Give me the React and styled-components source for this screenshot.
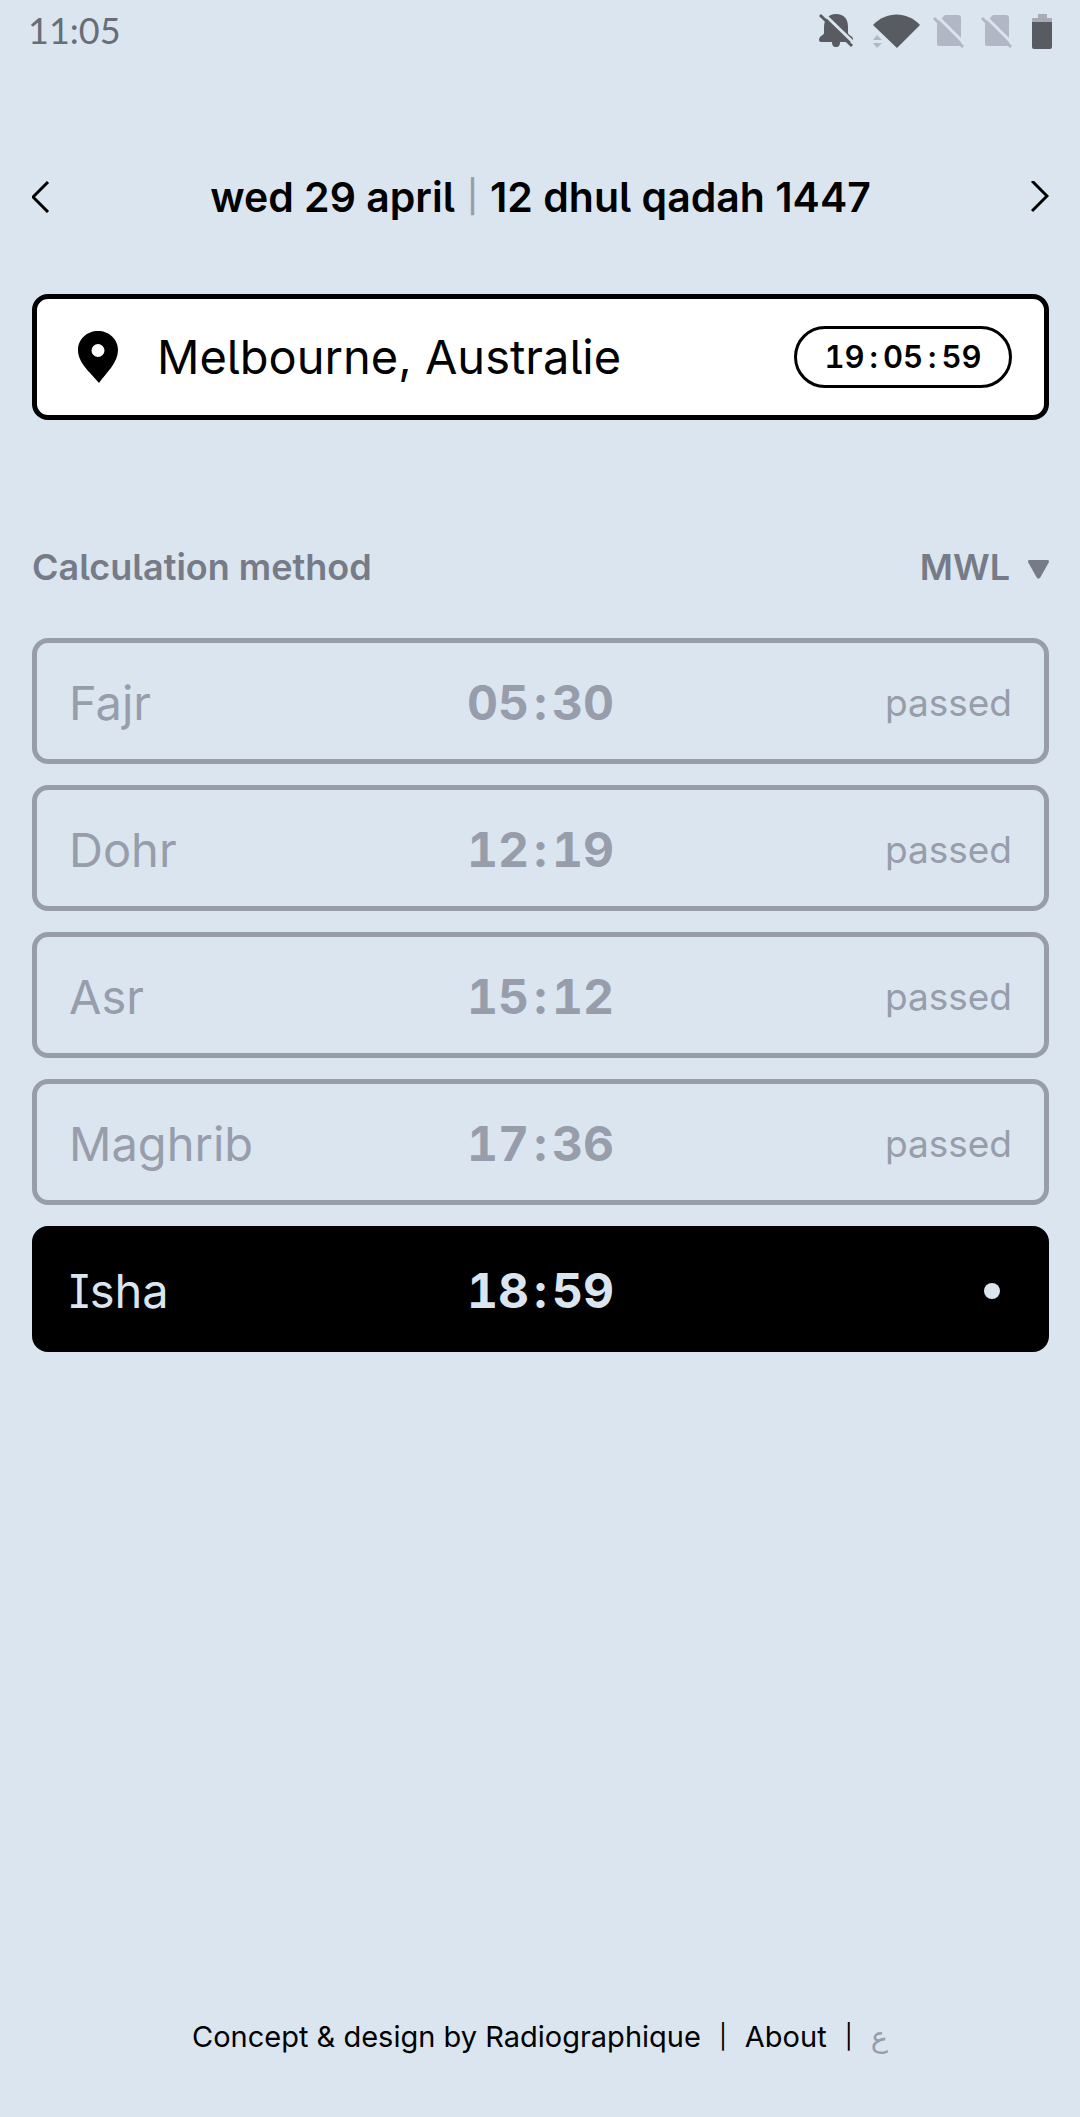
import { useState } from "react";
import styled, { createGlobalStyle } from "styled-components";

const prayers = [
    { name: "Fajr", time: "05:30", passed: true },
    { name: "Dohr", time: "12:19", passed: true },
    { name: "Asr", time: "15:12", passed: true },
    { name: "Maghrib", time: "17:36", passed: true },
    { name: "Isha", time: "18:59", passed: false },
];

const methods = ["MWL", "ISNA", "UOIF"];

function BellOffIcon() {
    return (
        <svg width="52" height="60" viewBox="0 0 52 60" aria-hidden="true">
            <path fill="#585b62" d="M24 14C16 14 12 20 12 27V33C12 35 7 36 7 40C7 41 8 42 9 42H39C41 42 41 40 41 39C41 36 36 35 36 33V27C36 19 32 14 24 14Z" />
            <path fill="#585b62" d="M20 42H28C28 45 27 47 24 47C21 47 20 45 20 42Z" />
            <path stroke="#dbe5ee" strokeWidth="3" d="M11 13L43 44" />
            <path stroke="#585b62" strokeWidth="3" d="M8 15L40 46" />
        </svg>
    );
}

function WifiIcon() {
    return (
        <svg width="62" height="60" viewBox="0 0 62 60" aria-hidden="true">
            <path fill="#585b62" d="M9 25C22 11 43 11 56 25L33 48Z" />
            <path fill="#b1b7c4" d="M9 40L13 35L18 40ZM9 43H18L13 48Z" />
        </svg>
    );
}

function SimOffIcon() {
    return (
        <svg width="48" height="60" viewBox="0 0 48 60" aria-hidden="true">
            <path fill="#b1b7c4" d="M19 15H32C34 15 35 16 35 18V44C35 45 34 46 33 46H13C12 46 11 45 11 44V23Z" />
            <path stroke="#dbe5ee" strokeWidth="3" d="M10 15L40 45" />
            <path stroke="#b1b7c4" strokeWidth="3" d="M8 18L37 47" />
        </svg>
    );
}

function BatteryIcon() {
    return (
        <svg width="30" height="60" viewBox="0 0 30 60" aria-hidden="true">
            <path fill="#a6abb6" d="M16 14H25V18H29Q30 18 30 19V22H10V19Q10 18 11 18H16Z" />
            <path fill="#585b62" d="M10 22H30V47Q30 49 28 49H12Q10 49 10 47Z" />
        </svg>
    );
}

function Chevron({ right }) {
    return (
        <svg width="18" height="32" viewBox="0 0 18 32" fill="none" stroke="#000" strokeWidth="3" aria-hidden="true">
            <path d={right ? "M1 0L16 15L1 30" : "M16 1L1 16L16 31"} />
        </svg>
    );
}

function Digits({ value }) {
    return value.split(/(:)/).map((part, i) => (
        part === ":" ? <Colon key={i}>:</Colon> : part
    ));
}

function App() {
    const [method, setMethod] = useState("MWL");

    return (
        <Page>
            <GlobalStyle />
            <StatusBar>
                <StatusClock>11:05</StatusClock>
                <StatusIcons>
                    <BellOffIcon />
                    <WifiIcon />
                    <SimOffIcon />
                    <SimOffIcon />
                    <BatteryIcon />
                </StatusIcons>
            </StatusBar>

            <Content>
                <DateBar>
                    <ArrowButton aria-label="Previous day"><Chevron /></ArrowButton>
                    <DateTitle>
                        <span>wed 29 april</span>
                        <Divider>|</Divider>
                        <span>12 dhul qadah 1447</span>
                    </DateTitle>
                    <ArrowButton aria-label="Next day"><Chevron right /></ArrowButton>
                </DateBar>

                <LocationButton>
                    <svg width="40" height="54" viewBox="0 0 40 54" aria-hidden="true">
                        <path fillRule="evenodd" d="M20 1C9 1 0 9 0 20C0 33 12 42 21 53C28 43 40 33 40 20C40 9 31 1 20 1ZM20 14A6.500 6.500 0 1 1 20 27A6.500 6.500 0 1 1 20 14Z" />
                    </svg>
                    <City>Melbourne, Australie</City>
                    <LocalTime><Digits value="19:05:59" /></LocalTime>
                </LocationButton>

                <MethodBar>
                    <label htmlFor="method">Calculation method</label>
                    <SelectWrap>
                        <MethodSelect id="method" value={method} onChange={(e) => setMethod(e.target.value)}>
                            {methods.map((m) => (
                                <option key={m}>{m}</option>
                            ))}
                        </MethodSelect>
                        <svg width="21" height="24" viewBox="0 0 21 24" aria-hidden="true">
                            <path fill="#767b87" d="M1 5H20Q21 5 21 7L12 23Q10 24 9 23L0 7Q0 5 1 5Z" />
                        </svg>
                    </SelectWrap>
                </MethodBar>

                <PrayerList>
                    {prayers.map((prayer) => (
                        <PrayerRow key={prayer.name} $passed={prayer.passed}>
                            <span>{prayer.name}</span>
                            <PrayerTime><Digits value={prayer.time} /></PrayerTime>
                            {prayer.passed ? <PrayerState>passed</PrayerState> : <Dot />}
                        </PrayerRow>
                    ))}
                </PrayerList>
            </Content>

            <Footer>
                <a href="#design">Concept &amp; design by Radiographique</a>
                <Separator>|</Separator>
                <a href="#about">About</a>
                <Separator>|</Separator>
                <ArabicLink href="#ar" lang="ar">ع</ArabicLink>
            </Footer>
        </Page>
    );
}

const GlobalStyle = createGlobalStyle`
    * {
        box-sizing: border-box;
    }
    body {
        margin: 0;
        background: #dbe5ef;
        color: #000;
        font-family: Inter, "Liberation Sans", sans-serif;
        /* l with a tail, I with serifs */
        font-feature-settings: "cv05", "cv08";
    }
    button, select {
        font: inherit;
        font-feature-settings: inherit;
        color: inherit;
    }
    a {
        color: inherit;
        text-decoration: none;
    }
    svg {
        display: block;
        flex: none;
    }
`;

const Page = styled.div`
    display: flex;
    flex-direction: column;
    min-height: 100vh;
`;

const StatusBar = styled.div`
    display: flex;
    justify-content: space-between;
    align-items: center;
    height: 60px;
    padding: 0 28px;
`;

const StatusClock = styled.span`
    font-family: Lato, sans-serif;
    font-size: 36px;
    line-height: 60px;
    color: #686d77;
`;

const StatusIcons = styled.div`
    display: flex;
`;

const Content = styled.main`
    padding: 0 31px 0 32px;
`;

const DateBar = styled.header`
    display: flex;
    justify-content: space-between;
    align-items: center;
    margin-top: 111px;
    height: 52px;
`;

const ArrowButton = styled.button`
    padding: 0;
    border: 0;
    background: none;
    cursor: pointer;
`;

const DateTitle = styled.h1`
    display: flex;
    align-items: center;
    margin: 0;
    font-size: 41px;
    font-weight: 600;
    line-height: 52px;
`;

const Divider = styled.span`
    margin: 0 12px;
    font-size: 32px;
    font-weight: 500;
    color: #989dab;
`;

const LocationButton = styled.button`
    display: flex;
    align-items: center;
    width: 100%;
    height: 126px;
    margin-top: 71px;
    padding: 0 32px 0 41px;
    background: #fff;
    border: 5px solid #000;
    border-radius: 16px;
    text-align: left;
    cursor: pointer;
`;

const City = styled.span`
    flex: 1;
    margin-left: 39px;
    font-size: 47px;
    line-height: 60px;
`;

const Colon = styled.span`
    margin: 0 5px;
`;

const LocalTime = styled.span`
    width: 218px;
    border: 3px solid #000;
    border-radius: 31px;
    font-size: 31px;
    font-weight: 600;
    font-variant-numeric: tabular-nums;
    line-height: 56px;
    text-align: center;
`;

const MethodBar = styled.div`
    display: flex;
    justify-content: space-between;
    align-items: center;
    margin-top: 124px;
    height: 46px;
    color: #767b87;
    font-size: 36px;
    font-weight: 600;
    line-height: 46px;
`;

const SelectWrap = styled.div`
    display: flex;
    align-items: center;
    gap: 18px;
`;

const MethodSelect = styled.select`
    appearance: none;
    field-sizing: content;
    padding: 0;
    border: 0;
    background: none;
`;

const PrayerList = styled.ul`
    display: flex;
    flex-direction: column;
    gap: 21px;
    margin: 48px 0 0;
    padding: 0;
    list-style: none;
`;

const PrayerRow = styled.li`
    display: grid;
    grid-template-columns: 1fr auto 1fr;
    align-items: center;
    height: 126px;
    padding: 4px 32px 0;
    border: 5px solid ${(props) => (props.$passed ? "#989dab" : "#000")};
    border-radius: 16px;
    background: ${(props) => (props.$passed ? "transparent" : "#000")};
    color: ${(props) => (props.$passed ? "#989dab" : "#dbe5ef")};
    font-size: 47px;
    line-height: 60px;
`;

const PrayerTime = styled.time`
    font-size: 48px;
    font-weight: 700;
    font-variant-numeric: tabular-nums;
`;

const PrayerState = styled.span`
    justify-self: end;
    font-size: 37px;
`;

const Dot = styled.span`
    justify-self: end;
    width: 16px;
    height: 16px;
    margin-right: 12px;
    border-radius: 50%;
    background: #dbe5ef;
`;

const Footer = styled.footer`
    display: flex;
    justify-content: center;
    align-items: center;
    gap: 18px;
    margin-top: auto;
    padding-bottom: 60px;
    font-size: 29px;
    line-height: 40px;
`;

const Separator = styled.span`
    font-size: 24px;
`;

const ArabicLink = styled.a`
    font-family: "DejaVu Sans", sans-serif;
    color: #989dab;
`;

export default App;
